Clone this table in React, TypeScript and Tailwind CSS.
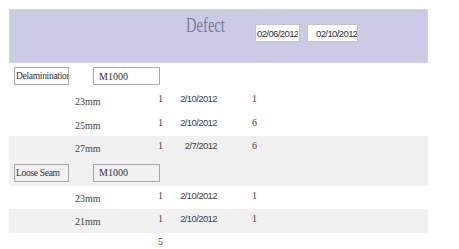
import React from 'react';

type Item = { size: string; qty: string; date: string; count: string; shade?: boolean };

const groups: { name: string; code: string; shade?: boolean; items: Item[] }[] = [
  {
    name: 'Delamininations',
    code: 'M1000',
    items: [
      { size: '23mm', qty: '1', date: '2/10/2012', count: '1' },
      { size: '25mm', qty: '1', date: '2/10/2012', count: '6' },
      { size: '27mm', qty: '1', date: '2/7/2012', count: '6', shade: true },
    ],
  },
  {
    name: 'Loose Seam',
    code: 'M1000',
    shade: true,
    items: [
      { size: '23mm', qty: '1', date: '2/10/2012', count: '1' },
      { size: '21mm', qty: '1', date: '2/10/2012', count: '1', shade: true },
    ],
  },
];

// dates are set in a tight sans
const dateFont = "font-['Liberation_Sans',sans-serif] text-[9.5px] tracking-[-0.6px]";
const serif = "font-['Liberation_Serif',serif]";

const DataRow = ({ item }: { item: Item }) => (
  <div
    className={`grid h-[23.5px] grid-cols-[66px_70px_18px_54px_35px_1fr] items-start text-[10px] leading-[12px] text-[#444] ${
      item.shade ? 'bg-[#f1f1f1]' : ''
    }`}
  >
    <span />
    <span className="pt-[7px]">{item.size}</span>
    <span className="pt-[4px] text-right">{item.qty}</span>
    <span className={`pt-[4px] text-right ${dateFont}`}>{item.date}</span>
    <span />
    <span className="pt-[4px]">{item.count}</span>
  </div>
);

const App = () => {
  return (
    <div className={`min-h-[249px] bg-white px-[9px] pt-[9px] ${serif}`}>
      <div className="w-[419px]">
        {/* Title band */}
        <div className="flex h-[54px] items-start border border-[#d4d4ec] bg-[#cbcbe6] pl-[176px]">
          <div className="w-[69px] pt-[4px]">
            <span className="inline-block origin-left scale-x-[0.73] text-[20px] leading-[23px] text-[#7d7d8c]">Defect</span>
          </div>
          <input
            readOnly
            value="02/06/2012"
            className={`mt-[14px] h-[18px] w-[45px] border border-[#c4c4c4] bg-white px-[1px] text-[#333] outline-none ${dateFont}`}
          />
          <input
            readOnly
            value="02/10/2012"
            className={`ml-[7px] mt-[14px] h-[18px] w-[51px] border border-[#c4c4c4] bg-white pl-[8px] text-[#333] outline-none ${dateFont}`}
          />
        </div>

        {groups.map((g) => (
          <div key={g.name}>
            <div className={`flex h-[26px] items-start gap-[24px] pl-[5px] pt-[4px] ${g.shade ? 'bg-[#f1f1f1]' : ''}`}>
              <input
                readOnly
                value={g.name}
                className={`h-[18px] w-[55px] border border-[#a8a8a8] bg-transparent pl-[1px] pr-0 text-[9.5px] tracking-[-0.3px] text-[#333] outline-none ${serif}`}
              />
              <input
                readOnly
                value={g.code}
                className={`h-[18px] w-[67px] border border-[#a8a8a8] bg-transparent pl-[5px] text-[10px] text-[#333] outline-none ${serif}`}
              />
            </div>
            {g.items.map((it, i) => (
              <DataRow key={i} item={it} />
            ))}
          </div>
        ))}

        <div className="grid h-[20px] grid-cols-[66px_70px_18px_1fr] items-start text-[10px] leading-[12px] text-[#444]">
          <span />
          <span />
          <span className="pt-[3px] text-right">5</span>
          <span />
        </div>
      </div>
    </div>
  );
};

export default App;
